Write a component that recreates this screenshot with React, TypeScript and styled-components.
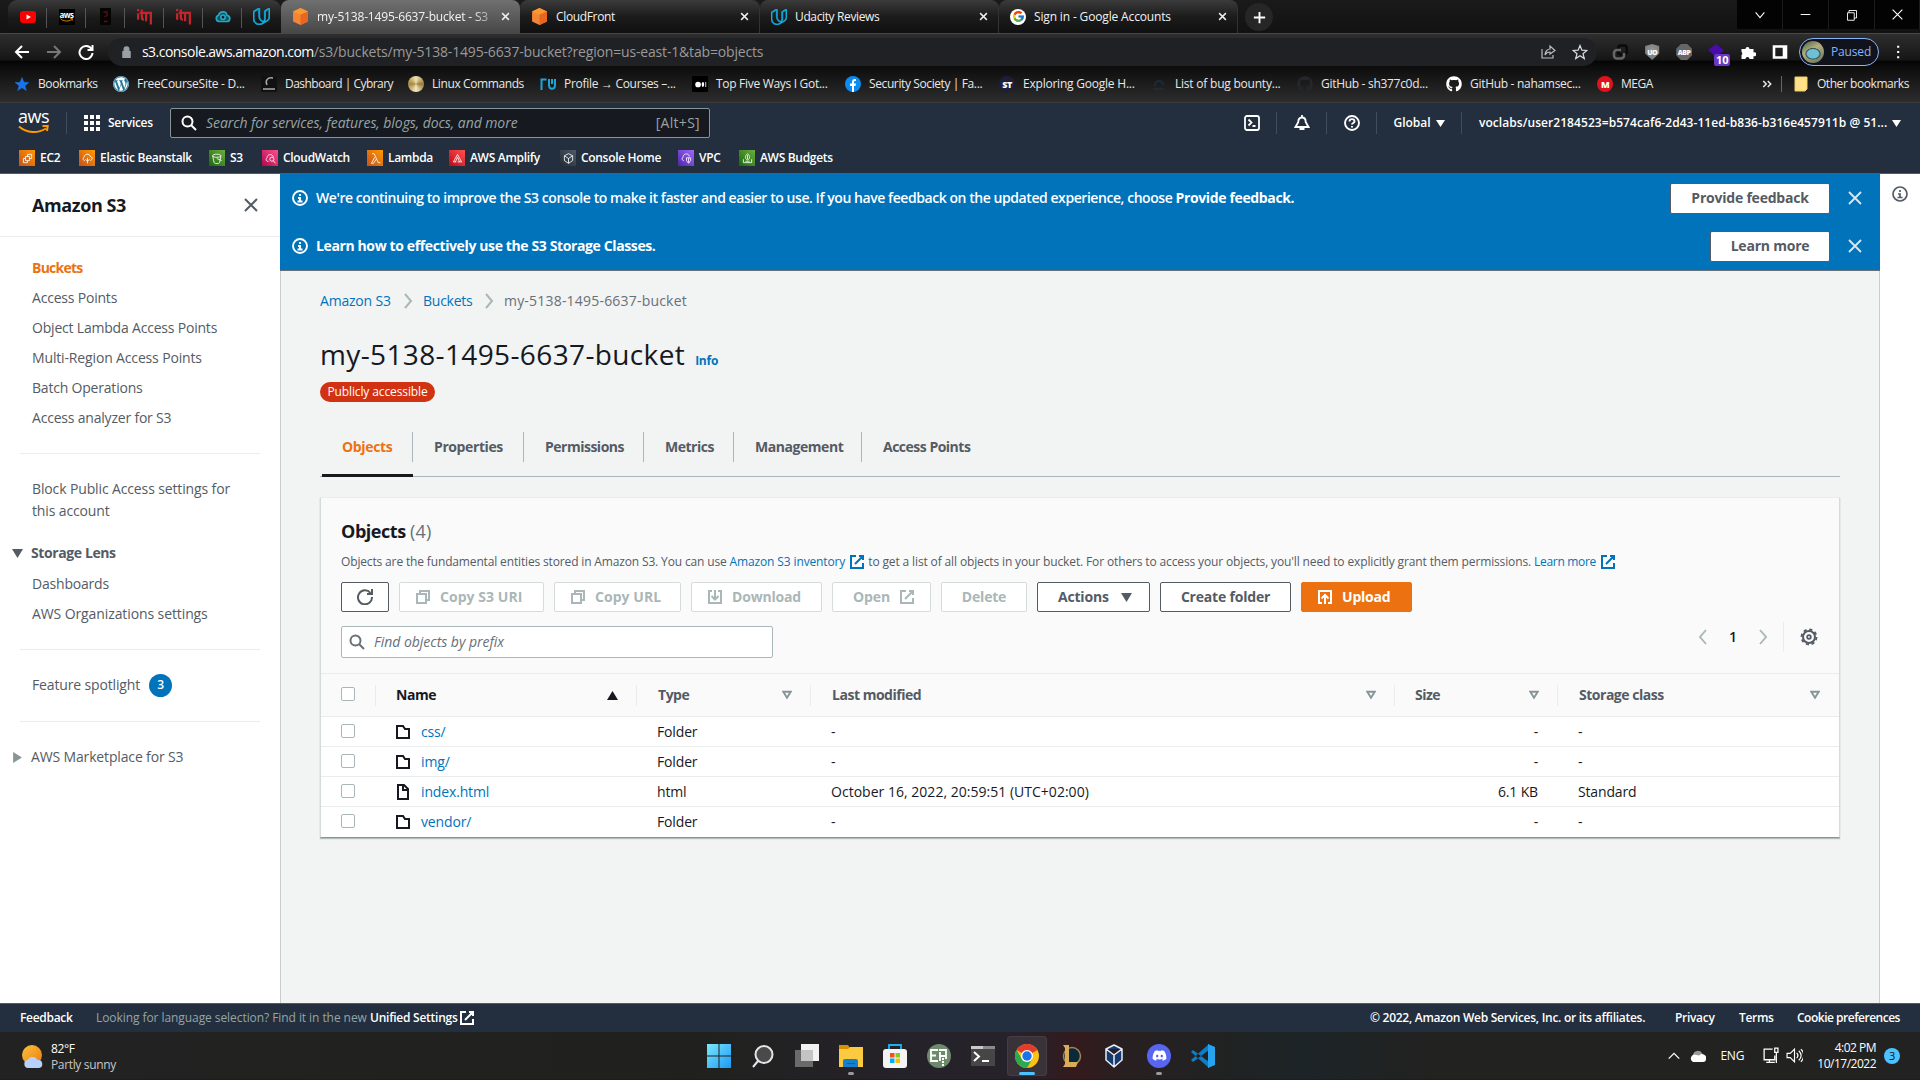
import React from 'react';
import styled, { createGlobalStyle, css } from 'styled-components';
import { FaWordpress, FaGithub, FaDiscord } from 'react-icons/fa';
import { FcGoogle } from 'react-icons/fc';
import { SiUdacity } from 'react-icons/si';

const Global = createGlobalStyle`
  * { box-sizing: border-box; }
  body { margin: 0; overflow: hidden; background: #f2f3f3; }
  svg { display: block; flex: none; }
`;

const Screen = styled.div`
  width: 1920px;
  height: 1080px;
  display: flex;
  flex-direction: column;
  overflow: hidden;
  white-space: nowrap;
  font: 14px/22px 'Open Sans', 'Noto Sans', sans-serif;
  letter-spacing: -0.17px;
  color: #16191f;
`;

const Spacer = styled.div`
  flex: 1;
`;

/* ---------- browser chrome ---------- */

const TabStrip = styled.div`
  height: 33px;
  flex: none;
  display: flex;
  padding-left: 8px;
  background: linear-gradient(#1a1a1a, #121212);
  color: #fff;
  font-size: 12px;
`;

const Pinned = styled.div`
  display: flex;
  background: linear-gradient(#3a3a3a, #1a1a1a 55%, #111);
  border-radius: 9px 9px 8px 0;
  width: 273px;
`;

const PinnedTab = styled.div`
  width: 39.1px;
  height: 33px;
  display: flex;
  align-items: center;
  justify-content: center;
  background: linear-gradient(#555, #555) right 0 top 8px / 1px 20px no-repeat;
  &:last-child {
    background: none;
  }
`;

const Tab = styled.div<{ $active?: boolean; $w: number }>`
  width: ${(p) => p.$w}px;
  display: flex;
  align-items: center;
  padding: 0 10px 0 11px;
  gap: 8px;
  border-radius: 8px 8px 0 0;
  color: #f2f2f2;
  background: ${(p) => (p.$active ? 'linear-gradient(#707070, #474747)' : 'linear-gradient(#3b3b3b, #1c1c1c 50%, #101010)')};
  border-right: ${(p) => (p.$active ? '0' : '1px solid #333')};
`;

const TabTitle = styled.div<{ $fade?: boolean; $ls?: number }>`
  flex: 1;
  overflow: hidden;
  letter-spacing: ${(p) => p.$ls ?? -0.15}px;
  ${(p) =>
    p.$fade &&
    css`
      mask-image: linear-gradient(to right, #000 88%, rgba(0, 0, 0, 0.35));
    `}
`;

const NewTab = styled.div`
  width: 28px;
  height: 28px;
  margin: 3px 0 0 7px;
  border-radius: 50%;
  background: #262626;
  display: flex;
  align-items: center;
  justify-content: center;
`;

const WindowButtons = styled.div`
  display: grid;
  grid-template-columns: repeat(3, 46px) 45px;
  height: 29px;
  background: #030303;
`;

const WindowButton = styled.div`
  display: flex;
  align-items: center;
  justify-content: center;
  border-right: 1px solid #1c1c1c;
`;

const Toolbar = styled.div`
  height: 33px;
  flex: none;
  display: flex;
  align-items: center;
  padding: 4px 15px 0 14px;
  border-top: 1px solid #484848;
  color: #fff;
  background: linear-gradient(#2e2e2e, #161616 80%, #050505 86%, #0c0c0c);
`;

const NavButtons = styled.div`
  display: flex;
  gap: 16px;
  width: 94px;
`;

const Omnibox = styled.div`
  width: 1490px;
  height: 28px;
  border-radius: 14px;
  background: #202124;
  display: flex;
  align-items: center;
  padding: 0 9px 0 12px;
  gap: 9px;
`;

const OmniboxActions = styled.div`
  display: flex;
  gap: 16px;
`;

const Url = styled.div`
  flex: 1;
  color: #9a9a9a;
`;
const UrlHost = styled.span`
  color: #fff;
  letter-spacing: -0.53px;
`;

const Extensions = styled.div`
  display: flex;
  gap: 16px;
  width: 202px;
  padding-left: 15px;
`;

const ExtWithBadge = styled.div`
  position: relative;
`;
const ExtBadge = styled.span`
  position: absolute;
  left: 6px;
  top: 10px;
  width: 16px;
  height: 12px;
  background: #6b38c4;
  border-radius: 2px;
  font-size: 11px;
  font-weight: 700;
  line-height: 12px;
  text-align: center;
`;

const Profile = styled.div`
  width: 80px;
  height: 28px;
  border: 1px solid #8ab4f8;
  border-radius: 14px;
  background: #10131c;
  display: flex;
  align-items: center;
  gap: 7px;
  padding-left: 2px;
  color: #8ab4f8;
  font-size: 12px;
  margin-right: 12px;
`;

const Avatar = styled.div`
  width: 22px;
  height: 22px;
  border-radius: 50%;
  background: radial-gradient(ellipse 8px 6px at 50% 58%, #6fc0d4 0 70%, #2f4f52 90%, transparent), linear-gradient(150deg, #3f5d42, #b5ad80 40%, #66705a);
`;

const Bookmarks = styled.div`
  height: 37px;
  flex: none;
  display: flex;
  align-items: center;
  padding: 0 11px 0 14px;
  background: linear-gradient(#0c0c0c, #2d2d2d);
  border-bottom: 1px solid #3c3c3c;
  color: #e8e8e8;
  font-size: 12px;
  letter-spacing: -0.46px;
`;

const Bookmark = styled.div<{ $w?: number; $ls?: number }>`
  width: ${(p) => (p.$w ? p.$w + 'px' : 'auto')};
  display: flex;
  align-items: center;
  gap: 8px;
  ${(p) => p.$ls !== undefined && `letter-spacing: ${p.$ls}px;`}
`;

const BookmarkRule = styled.div`
  width: 1px;
  height: 16px;
  background: #666;
  margin: 0 11px 0 8px;
`;

const Disc = styled.div<{ $bg: string; $round?: boolean; $size?: number }>`
  width: ${(p) => p.$size ?? 16}px;
  height: ${(p) => p.$size ?? 16}px;
  flex: none;
  border-radius: ${(p) => (p.$round ? '50%' : '1px')};
  background: ${(p) => p.$bg};
  color: #fff;
  font-size: 9px;
  font-weight: 800;
  line-height: 1;
  letter-spacing: -0.5px;
  display: flex;
  align-items: center;
  justify-content: center;
`;

const Shield = styled(Disc)`
  font-size: 7px;
  border-radius: 0;
  clip-path: polygon(50% 0, 94% 12%, 94% 60%, 50% 100%, 6% 60%, 6% 12%);
`;

const Octagon = styled(Disc)`
  font-size: 7px;
  border-radius: 0;
  clip-path: polygon(30% 0, 70% 0, 100% 30%, 100% 70%, 70% 100%, 30% 100%, 0 70%, 0 30%);
`;

const AwsFavicon = styled.div`
  width: 16px;
  height: 16px;
  background: #000;
  display: flex;
  flex-direction: column;
  align-items: center;
  justify-content: center;
  font-size: 8px;
  font-weight: 700;
  line-height: 6px;
  letter-spacing: -0.5px;
`;

/* ---------- AWS header ---------- */

const AwsBar = styled.div`
  height: 71px;
  flex: none;
  background: #232f3e;
  border-bottom: 1px solid #545b64;
  color: #fff;
  display: flex;
  flex-direction: column;
`;

const AwsTop = styled.div`
  height: 40px;
  display: flex;
  align-items: center;
  padding-right: 17px;
  font-size: 12px;
  font-weight: 600;
  letter-spacing: 0;
`;

const AwsLogo = styled.div`
  width: 67px;
  height: 22px;
  padding-left: 18px;
  display: flex;
  flex-direction: column;
  gap: 4px;
  border-right: 1px solid #414d5c;
  font-size: 18px;
  font-weight: 500;
  line-height: 9px;
  letter-spacing: -0.5px;
`;

const Services = styled.div`
  width: 103px;
  display: flex;
  align-items: center;
  gap: 8px;
  padding-left: 17px;
  letter-spacing: -0.3px;
`;

const AwsSearch = styled.div`
  width: 540px;
  height: 30px;
  background: #161920;
  border: 1px solid #879596;
  border-radius: 2px;
  display: flex;
  align-items: center;
  justify-content: space-between;
  padding: 0 9px 0 10px;
  gap: 9px;
  color: #95a5a6;
  font-size: 14px;
  font-weight: 400;
`;

const Placeholder = styled.span<{ $ls?: number }>`
  flex: 1;
  font-style: italic;
  letter-spacing: ${(p) => p.$ls ?? 0}px;
`;

const Shortcut = styled.span`
  letter-spacing: 0.3px;
`;

const AwsItem = styled.div<{ $w: number; $last?: boolean }>`
  width: ${(p) => p.$w}px;
  height: 22px;
  display: flex;
  align-items: center;
  justify-content: center;
  gap: 5px;
  border-right: 1px solid #414d5c;
  ${(p) =>
    p.$last &&
    css`
      justify-content: flex-start;
      padding-left: 17px;
      border-right: 0;
      letter-spacing: 0.06px;
    `}
`;

const Favorites = styled.div`
  height: 30px;
  display: flex;
  align-items: center;
  padding: 0 0 0 19px;
  font-size: 12px;
  font-weight: 600;
  letter-spacing: -0.31px;
`;

const Favorite = styled.div<{ $w: number }>`
  width: ${(p) => p.$w}px;
  display: flex;
  align-items: center;
  gap: 5px;
`;

const FavTile = styled.div<{ $from: string; $to: string }>`
  width: 16px;
  height: 16px;
  display: flex;
  align-items: center;
  justify-content: center;
  background: linear-gradient(45deg, ${(p) => p.$from}, ${(p) => p.$to});
`;

/* ---------- page ---------- */

const Page = styled.div`
  height: 829px;
  flex: none;
  display: grid;
  grid-template-columns: 281px 1599px 40px;
`;

const Sidebar = styled.nav`
  background: #fff;
  border-right: 1px solid #c6cbcb;
  color: #545b64;
`;

const SideHeader = styled.div`
  height: 63px;
  display: flex;
  align-items: center;
  justify-content: space-between;
  padding: 0 21px 1px 32px;
  border-bottom: 1px solid #eaeded;
  color: #16191f;
  font-size: 18px;
  font-weight: 700;
  letter-spacing: -0.4px;
`;

const SideGroup = styled.div<{ $top: number; $bottom: number; $last?: boolean }>`
  margin: 0 20px;
  padding: ${(p) => p.$top}px 0 ${(p) => p.$bottom}px 12px;
  border-bottom: ${(p) => (p.$last ? 0 : '1px solid #eaeded')};
`;

const SideLink = styled.div<{ $active?: boolean; $ls?: number }>`
  height: 30px;
  display: flex;
  align-items: center;
  gap: 9px;
  letter-spacing: ${(p) => p.$ls ?? -0.2}px;
  ${(p) =>
    p.$active &&
    css`
      color: #ec7211;
      font-weight: 700;
      letter-spacing: -0.75px;
    `}
`;

const SideWrapped = styled.div`
  white-space: normal;
  letter-spacing: -0.13px;
  width: 210px;
`;

const SideSection = styled.div<{ $bold?: boolean; $top?: number }>`
  display: flex;
  align-items: center;
  gap: 8px;
  height: 30px;
  margin: ${(p) => p.$top ?? 0}px 0 1px -20px;
  font-weight: ${(p) => (p.$bold ? 700 : 400)};
  letter-spacing: ${(p) => (p.$bold ? -0.4 : -0.15)}px;
`;

const CountBadge = styled.span`
  width: 23px;
  height: 23px;
  border-radius: 50%;
  background: #0073bb;
  color: #fff;
  font-size: 12px;
  font-weight: 600;
  display: flex;
  align-items: center;
  justify-content: center;
`;

const Main = styled.main`
  background: #f2f3f3;
  display: flex;
  flex-direction: column;
  border-right: 1px solid #c6cbcb;
`;

const Flash = styled.div`
  height: 48px;
  display: flex;
  align-items: center;
  background: #0073bb;
  color: #fff;
  padding: 0 17px 0 12px;
  gap: 8px;
  margin: 0 -1px 0 -1px;
  &:nth-child(2) {
    height: 49px;
    border-bottom: 1px solid #687078;
  }
`;

const FlashText = styled.div<{ $bold?: boolean }>`
  flex: 1;
  font-weight: ${(p) => (p.$bold ? 700 : 600)};
  letter-spacing: ${(p) => (p.$bold ? -0.38 : -0.44)}px;
  b {
    font-weight: 700;
    letter-spacing: -0.36px;
  }
`;

const FlashButton = styled.div<{ $w: number }>`
  width: ${(p) => p.$w}px;
  height: 31px;
  background: #fff;
  border: 1px solid #545b64;
  border-radius: 2px;
  color: #545b64;
  font-weight: 700;
  letter-spacing: -0.22px;
  display: flex;
  align-items: center;
  justify-content: center;
  margin-right: 9px;
`;

const Content = styled.div`
  padding: 19px 39px 0 39px;
`;

const Crumbs = styled.div`
  height: 22px;
  display: flex;
  align-items: center;
  color: #687078;
`;

const Crumb = styled.span<{ $w?: number; $link?: boolean; $ls: number }>`
  ${(p) => p.$w && `width: ${p.$w}px;`}
  letter-spacing: ${(p) => p.$ls}px;
  color: ${(p) => (p.$link ? '#0073bb' : '#687078')};
`;

const CrumbArrow = styled.span`
  width: 31px;
  display: flex;
  justify-content: center;
`;

const TitleRow = styled.div`
  margin-top: 24px;
  height: 36px;
  display: flex;
  align-items: baseline;
  gap: 10px;
`;

const Title = styled.h1`
  margin: 0;
  font-size: 28px;
  line-height: 36px;
  font-weight: 400;
  letter-spacing: 0.37px;
`;

const Info = styled.span`
  color: #0073bb;
  font-size: 12px;
  font-weight: 700;
  letter-spacing: -0.25px;
`;

const PublicBadge = styled.div`
  width: 115px;
  height: 20px;
  margin-top: 10px;
  border-radius: 10px;
  background: #d13212;
  color: #fff;
  font-size: 12px;
  line-height: 20px;
  text-align: center;
  letter-spacing: -0.12px;
`;

const Tabs = styled.div`
  height: 63px;
  margin-top: 12px;
  display: flex;
  padding-left: 2px;
  border-bottom: 1px solid #aab7b8;
`;

const PageTab = styled.div<{ $w: number; $active?: boolean; $ls?: number }>`
  width: ${(p) => p.$w}px;
  height: 63px;
  display: flex;
  padding: 22px 0 0 ${(p) => (p.$active ? 20 : 21)}px;
  font-weight: 700;
  line-height: 21px;
  letter-spacing: ${(p) => p.$ls ?? -0.5}px;
  color: ${(p) => (p.$active ? '#ec7211' : '#545b64')};
  background: linear-gradient(#aab7b8, #aab7b8) right 0 top 18px / 1px 30px no-repeat;
  border-bottom: ${(p) => (p.$active ? '3px solid #16191f' : '0')};
  &:last-child {
    background: none;
  }
`;

const Card = styled.section`
  margin-top: 20px;
  width: 1520px;
  background: #fafafa;
  border: 1px solid #d5dbdb;
  border-top-color: #eaeded;
  border-bottom: 1px solid #879596;
  box-shadow: 0 1px 1px rgba(0, 28, 36, 0.25);
`;

const CardHeader = styled.div`
  height: 175px;
  padding: 21px 20px 0;
`;

const CardTitle = styled.h2`
  margin: 0;
  font-size: 18px;
  line-height: 24px;
  font-weight: 700;
  letter-spacing: -0.45px;
  span {
    font-weight: 400;
    color: #687078;
    letter-spacing: 0.2px;
  }
`;

const Description = styled.div`
  margin-top: 7px;
  height: 24px;
  font-size: 12px;
  color: #545b64;
  display: flex;
  align-items: center;
  gap: 3px;
  letter-spacing: -0.133px;
  span {
    letter-spacing: -0.15px;
  }
  a {
    color: #0073bb;
    display: flex;
    align-items: center;
    gap: 4px;
    letter-spacing: -0.13px;
  }
  a:last-child {
    letter-spacing: -0.3px;
  }
`;

const Actions = styled.div`
  display: flex;
  gap: 10px;
  margin-top: 8px;
`;

const Button = styled.div<{ $w: number; $kind?: 'disabled' | 'primary'; $ls?: number; $pad?: number; $gap?: number }>`
  width: ${(p) => p.$w}px;
  height: 30px;
  display: flex;
  align-items: center;
  justify-content: ${(p) => (p.$pad ? 'flex-start' : 'center')};
  padding-left: ${(p) => p.$pad ?? 0}px;
  gap: ${(p) => p.$gap ?? 9}px;
  border-radius: 2px;
  font-weight: 700;
  letter-spacing: ${(p) => p.$ls ?? -0.2}px;
  color: #545b64;
  background: #fff;
  border: 1px solid #545b64;
  ${(p) =>
    p.$kind === 'disabled' &&
    css`
      color: #aab7b8;
      border-color: #d5dbdb;
    `}
  ${(p) =>
    p.$kind === 'primary' &&
    css`
      color: #fff;
      background: #ec7211;
      border-color: #ec7211;
    `}
`;

const FilterRow = styled.div`
  display: flex;
  justify-content: space-between;
  margin-top: 14px;
`;

const Filter = styled.div`
  width: 432px;
  height: 32px;
  background: #fff;
  border: 1px solid #aab7b8;
  border-radius: 2px;
  display: flex;
  align-items: center;
  gap: 9px;
  padding-left: 7px;
  color: #687078;
`;

const Pager = styled.div`
  height: 30px;
  margin: -4px -14px 0 0;
  display: flex;
  align-items: center;
  font-weight: 600;
`;

const PagerCell = styled.div<{ $w: number; $rule?: boolean }>`
  width: ${(p) => p.$w}px;
  height: 30px;
  display: flex;
  align-items: center;
  justify-content: center;
  border-left: ${(p) => (p.$rule ? '1px solid #eaeded' : 0)};
`;

const rowGrid = css`
  display: grid;
  grid-template-columns: 55px 261px 174px 584px 163px 1fr;
  align-items: center;
`;

const HeadRow = styled.div`
  ${rowGrid}
  height: 44px;
  border-top: 1px solid #eaeded;
  border-bottom: 1px solid #eaeded;
  color: #545b64;
  font-weight: 700;
  letter-spacing: -0.48px;
`;

const HeadCell = styled.div<{ $dark?: boolean; $left?: number }>`
  height: 21px;
  display: flex;
  align-items: center;
  justify-content: space-between;
  padding: 0 18px 0 ${(p) => p.$left ?? 21}px;
  border-right: 1px solid #eaeded;
  color: ${(p) => (p.$dark ? '#16191f' : '#545b64')};
  &:last-child {
    border-right: 0;
    padding-right: 19px;
  }
`;

const Row = styled.div`
  ${rowGrid}
  height: 30px;
  background: #fff;
  border-bottom: 1px solid #eaeded;
  letter-spacing: -0.15px;
  &:last-child {
    border-bottom: 0;
  }
`;

const Cell = styled.div<{ $right?: boolean; $ls?: number }>`
  display: flex;
  align-items: center;
  gap: 10px;
  padding: 0 20px;
  justify-content: ${(p) => (p.$right ? 'flex-end' : 'flex-start')};
  ${(p) => p.$ls !== undefined && `letter-spacing: ${p.$ls}px;`}
`;

const NameCell = styled(Cell)`
  padding-left: 19px;
  a {
    color: #0073bb;
  }
`;

const Checkbox = styled.div`
  width: 14px;
  height: 14px;
  margin-top: -2px;
  border: 1px solid #aab7b8;
  border-radius: 2px;
  background: #fff;
`;

const Rail = styled.div`
  background: #fff;
  color: #545b64;
  display: flex;
  justify-content: center;
  padding-top: 12px;
`;

const Footer = styled.footer`
  height: 29px;
  flex: none;
  background: #232f3e;
  border-top: 1px solid #545b64;
  color: #fff;
  font-size: 12px;
  font-weight: 600;
  display: flex;
  align-items: center;
  padding: 0 20px;
`;

const FooterText = styled.span<{ $w?: number; $muted?: boolean; $ls?: number }>`
  ${(p) => p.$w && `width: ${p.$w}px;`}
  letter-spacing: ${(p) => p.$ls ?? -0.3}px;
  ${(p) => p.$muted && 'color: #95a5a6; font-weight: 400;'}
`;

/* ---------- taskbar ---------- */

const Taskbar = styled.div`
  height: 48px;
  flex: none;
  display: grid;
  grid-template-columns: 699px 530px 1fr;
  align-items: center;
  color: #fff;
  font-size: 12px;
  background: linear-gradient(90deg, #222 0, #20211e 36%, #25222a 48%, #26222b 53%, #331a1d 56%, #272021 59%, #202222 64%, #1d2427 68%, #222220 75%, #222);
  border-bottom: 1px solid #2c161c;
`;

const Weather = styled.div`
  display: flex;
  align-items: center;
  gap: 7px;
  padding: 3px 0 0 20px;
  line-height: 16px;
  letter-spacing: -0.35px;
  span {
    display: block;
    color: #c8c8c8;
  }
`;

const Apps = styled.div`
  display: flex;
  gap: 4px;
`;

const AppSlot = styled.div<{ $active?: boolean; $bar?: 'dot' | 'line' }>`
  width: 40px;
  height: 40px;
  border-radius: 4px;
  display: flex;
  align-items: center;
  justify-content: center;
  position: relative;
  ${(p) =>
    p.$active &&
    css`
      background: #393238;
      box-shadow: inset 0 0 0 1px #443d43;
    `}
  ${(p) =>
    p.$bar &&
    css`
      &::after {
        content: '';
        position: absolute;
        bottom: 1px;
        height: 3px;
        border-radius: 2px;
        width: ${p.$bar === 'line' ? 16 : 6}px;
        background: ${p.$bar === 'line' ? '#4cc2ff' : '#9a9a9a'};
      }
    `}
`;

const Tray = styled.div`
  display: flex;
  align-items: center;
  justify-content: flex-end;
  padding-right: 20px;
`;

const TrayGap = styled.div<{ $w: number }>`
  width: ${(p) => p.$w}px;
`;

const Clock = styled.div`
  text-align: right;
  line-height: 16px;
  letter-spacing: -0.5px;
  margin: 0 8px 0 14px;
`;

const TrayBadge = styled.div`
  width: 16px;
  height: 16px;
  border-radius: 50%;
  background: #4cc2ff;
  color: #111;
  font-size: 11px;
  line-height: 16px;
  text-align: center;
`;

/* ---------- icons ---------- */

type IconProps = { d: string; s?: number; c?: string; w?: number; f?: string; vb?: string };
const Icon = ({ d, s = 16, c = 'currentColor', w = 2, f = 'none', vb = '0 0 16 16' }: IconProps) => (
  <svg width={s} height={s} viewBox={vb} fill={f} stroke={c} strokeWidth={w}>
    <path d={d} />
  </svg>
);

const CLOSE = 'M2 2l12 12M14 2L2 14';
const INFO = 'M8 1a7 7 0 1 1 0 14A7 7 0 0 1 8 1zM8 12V8H6M5.5 11.5h5M8 4v2';
const EXTERNAL = 'M10 2h4v4M6 10l8-8M14 9v5H2V2h5';
const COPY = 'M2 5h9v9H2zM5 5V2h9v9h-3';
const FOLDER = 'M2 2h6l2 3h4v9H2z';
const FILE = 'M3 1h6l4 4v10H3zM8 1v5h5';

const TabClose = ({ s = 9 }) => <Icon d={CLOSE} s={s} w={2.6} c="#eee" />;

const Cube = () => (
  <svg width="17" height="17" viewBox="0 0 16 16">
    <path d="M8 0l7 3.2v9.6L8 16l-7-3.2V3.2z" fill="#f58536" />
    <path d="M8 0l7 3.2L8 6.3 1 3.2z" fill="#fa9a2e" />
    <path d="M8 6.3l7-3.1v9.6L8 16z" fill="#e8661f" />
  </svg>
);

const Caret = ({ s = 10, up = false, c = 'currentColor' }) => (
  <svg width={s} height={s} viewBox="0 0 10 10">
    <path d={up ? 'M5 1l5 8H0z' : 'M0 1h10L5 9z'} fill={c} />
  </svg>
);

const SortTri = () => <Icon d="M1.3 1.8h7.400L5 7.800z" s={10} vb="0 0 10 10" w={1.9} c="#879596" />;

const Iti = () => (
  <svg width="17" height="17" viewBox="0 0 16 16" fill="none" stroke="#c4252d" strokeWidth="2.1">
    <path d="M2 5v6M2 1v2M5.500 1.500V9q0 2 2 2M3.500 4.500H14v11M9.500 4.500v8" />
  </svg>
);

const YT = () => (
  <svg width="16" height="16" viewBox="0 0 16 16">
    <rect y="2" width="16" height="12" rx="3" fill="#f00" />
    <path d="M6.5 5.4v5.2L11 8z" fill="#fff" />
  </svg>
);

const Smile = ({ w = 31, h = 9 }) => (
  <svg width={w} height={h} viewBox="0 0 31 9" fill="none" stroke="#f90" strokeWidth="2">
    <path d="M1 1.500c8 7 19 7 27 2M24.500 1h5.200l-.7 5" />
  </svg>
);

const FavIcon = ({ from, to, d }: { from: string; to: string; d: string }) => (
  <FavTile $from={from} $to={to}>
    <Icon d={d} s={11} w={1.2} c="#fff" />
  </FavTile>
);

const Star = ({ fill, stroke }: { fill: string; stroke: string }) => (
  <Icon d="M8 1.500l1.900 4.700 5 .3-3.900 3.200 1.300 4.900L8 11.800l-4.300 2.800L5 9.700 1.100 6.500l5-.3z" f={fill} c={stroke} w={fill === 'none' ? 1.2 : 0.5} />
);

/* ---------- data ---------- */

const favorites = [
  ['EC2', 60, '#c8511b', '#f90', 'M5 5h6v6H5zM2 8v6h6M8 2h6v6M2 8h3M8 14v-3M8 5V2M14 8h-3'],
  ['Elastic Beanstalk', 130, '#c8511b', '#f90', 'M4 11H3a3 3 0 0 1 0-5c0-5 8-6 9-1 3 0 4 5 0 6M8 15V7M5 9l3 3 3-3'],
  ['S3', 53, '#1b660f', '#6cae3e', 'M1 4c0-3 12-3 12 0s-12 3-12 0l2 10c2 2 7 2 8 0l2-10M7 8l7 3'],
  ['CloudWatch', 105, '#b0084d', '#ff4f8b', 'M5 12H3a3 3 0 0 1 0-5c0-6 9-6 9-1M10 6a3 3 0 1 1 0 6 3 3 0 0 1 0-6M12 11l3 4'],
  ['Lambda', 82, '#c8511b', '#f90', 'M3 1h3l6 13h3M7 6L2 15h3l4-6'],
  ['AWS Amplify', 111, '#bd0816', '#ff5252', 'M8 2L2 13h4M8 6l-3 7M8 6l3 7M8 2l6 11H8'],
  ['Console Home', 118, '#232b34', '#4d5a68', 'M8 1l6 3v7l-6 4-6-4V4zM2 4l6 4 6-4M8 8v7'],
  ['VPC', 61, '#4d27a8', '#a166ff', 'M4 11H3a3 3 0 0 1 0-5c0-6 9-6 9-1M8 7h6v4l-3 4-3-4zM11 7v7'],
  ['AWS Budgets', 110, '#1b660f', '#6cae3e', 'M8 1c4 3 4 8 0 9-4-1-4-6 0-9M8 3v6M2 9v5h12V9M5 12h6'],
] as const;

const rows = [
  ['css/', 'Folder', '-', '-', '-'],
  ['img/', 'Folder', '-', '-', '-'],
  ['index.html', 'html', 'October 16, 2022, 20:59:51 (UTC+02:00)', '6.1 KB', 'Standard'],
  ['vendor/', 'Folder', '-', '-', '-'],
];

const pageTabs = [
  ['Objects', 91, -0.35],
  ['Properties', 111, -0.4],
  ['Permissions', 120, -0.5],
  ['Metrics', 90, -0.5],
  ['Management', 128, -0.45],
  ['Access Points', 120, -0.5],
] as const;

/* ---------- sections ---------- */

const BrowserChrome = () => (
  <>
    <TabStrip>
      <Pinned>
        <PinnedTab><YT /></PinnedTab>
        <PinnedTab><AwsFavicon>aws<Smile w={13} h={4} /></AwsFavicon></PinnedTab>
        <PinnedTab>
          <svg width="11" height="17" viewBox="0 0 11 17">
            <rect width="11" height="17" fill="#050505" />
            <path d="M3.500 4h3.500v3.500L4.500 9M4 13.500h3.500" fill="none" stroke="#5e1010" strokeWidth="1.300" />
          </svg>
        </PinnedTab>
        <PinnedTab><Iti /></PinnedTab>
        <PinnedTab><Iti /></PinnedTab>
        <PinnedTab>
          <Icon d="M4 12.500a3.200 3.200 0 0 1-.5-6.200C5 1.500 11.500 2 12 6.500c4 .3 3.500 6 0 6zM8 6a2.200 2.200 0 1 0 0 4.400A2.200 2.200 0 0 0 8 6" c="#25a6c4" f="#12545f" w={1.7} />
        </PinnedTab>
        <PinnedTab><SiUdacity size={17} color="#11b0e4" stroke="#11b0e4" strokeWidth={1} /></PinnedTab>
      </Pinned>
      <Tab $active $w={239}><Cube /><TabTitle $fade $ls={-0.18}>my-5138-1495-6637-bucket - S3</TabTitle><TabClose /></Tab>
      <Tab $w={240}><Cube /><TabTitle $ls={-0.35}>CloudFront</TabTitle><TabClose /></Tab>
      <Tab $w={239}><SiUdacity size={16} color="#11b0e4" stroke="#11b0e4" strokeWidth={1} /><TabTitle $ls={-0.37}>Udacity Reviews</TabTitle><TabClose /></Tab>
      <Tab $w={239}>
        <Disc $bg="#fff" $round><FcGoogle size={13} /></Disc>
        <TabTitle>Sign in - Google Accounts</TabTitle><TabClose />
      </Tab>
      <NewTab><Icon d="M8 2v12M2 8h12" s={15} /></NewTab>
      <Spacer />
      <WindowButtons>
        <WindowButton><Icon d="M3 5l5 6 5-6" s={14} w={1.2} /></WindowButton>
        <WindowButton><Icon d="M2 8h12" s={13} w={1.2} /></WindowButton>
        <WindowButton><Icon d="M2 5h9v10H2zM4 5V2h10v10h-3" s={12} w={1.2} /></WindowButton>
        <WindowButton><Icon d={CLOSE} s={13} w={1.4} /></WindowButton>
      </WindowButtons>
    </TabStrip>
    <Toolbar>
      <NavButtons>
        <Icon d="M15 8H2M8 2L2 8l6 6" />
        <Icon d="M1 8h13M8 2l6 6-6 6" c="#777" />
        <Icon d="M13.500 5A6.500 6.500 0 1 0 14.500 9M14.500 1v5h-5" />
      </NavButtons>
      <Omnibox>
        <Icon d="M3.500 7h9v7h-9zM5 7V4a3 3 0 0 1 6 0v3" s={13} f="#9aa0a6" c="#9aa0a6" w={1.4} />
        <Url><UrlHost>s3.console.aws.amazon.com</UrlHost>/s3/buckets/my-5138-1495-6637-bucket?region=us-east-1&amp;tab=objects</Url>
        <OmniboxActions>
          <Icon d="M2 5v9h11v-3M5 11c0-4 3-6 5-6V2l5 4.500L10 10V8C8 8 6 9 5 11z" c="#bbb" w={1.2} />
          <Star fill="none" stroke="#ddd" />
        </OmniboxActions>
      </Omnibox>
      <Extensions>
        <svg width="16" height="16" viewBox="0 0 16 16" fill="none" strokeWidth="2.600">
          <rect x="6" y="1.500" width="9" height="9" rx="3" stroke="#0a0a0a" />
          <path d="M12 9v2.500a3 3 0 0 1-3 3H5a3 3 0 0 1-3-3V9a3 3 0 0 1 3-3h4" stroke="#666" />
        </svg>
        <Shield $bg="radial-gradient(circle at 50% 40%, #999, #6d6d6d)">UO</Shield>
        <Octagon $bg="#666">ABP</Octagon>
        <ExtWithBadge>
          <Icon d="M8 0l8 6-8 7-8-7z" f="#4a0ca8" c="none" />
          <ExtBadge>10</ExtBadge>
        </ExtWithBadge>
        <Icon d="M1.500 5h4a2 2 0 1 1 4 0h4v3.500a2 2 0 1 1 0 3.500v3h-4a2 2 0 0 0-4 0h-4v-4a2 2 0 0 0 0-3z" f="#fff" c="none" />
        <Icon d="M2 2.500h12v11H2zM12 2v12" w={2.600} />
      </Extensions>
      <Profile><Avatar />Paused</Profile>
      <Icon d="M7 2h2.400M7 8h2.400M7 14h2.400" s={14} w={2.400} />
    </Toolbar>
    <Bookmarks>
      <Bookmark $w={99} $ls={-0.4}><Star fill="#1a73e8" stroke="#1a73e8" />Bookmarks</Bookmark>
      <Bookmark $w={148} $ls={-0.25}>
        <Disc $bg="#21759b" $round><FaWordpress size={16} /></Disc>FreeCourseSite - D...
      </Bookmark>
      <Bookmark $w={147} $ls={-0.53}>
        <Disc $bg="#111"><Icon d="M12 2C6 1 4 5 6 9M2 13h12" c="#aaa" w={1.5} /></Disc>Dashboard | Cybrary
      </Bookmark>
      <Bookmark $w={132} $ls={-0.4}>
        <Disc $round $bg="conic-gradient(#f1e2ae,#9b7d3c,#f5e8bd,#a5873f,#f1e2ae)" />Linux Commands
      </Bookmark>
      <Bookmark $w={152} $ls={-0.3}><Icon d="M1.500 14V3.500h5M9 3v6c0 5 6 5 6 0V3M12 3v5" c="#1aa7d8" w={2} />Profile → Courses –...</Bookmark>
      <Bookmark $w={153} $ls={-0.3}>
        <Disc $bg="#000"><Icon d="M5 4.500a3.500 3.500 0 1 1 0 7 3.500 3.500 0 0 1 0-7M11 5c2 0 2 6 0 6s-2-6 0-6M14 5h1v6h-1z" s={13} f="#fff" c="none" /></Disc>
        Top Five Ways I Got...
      </Bookmark>
      <Bookmark $w={154} $ls={-0.39}>
        <Disc $round $bg="#0d8bf0"><Icon d="M7 16v-6H5V7.500h2V6c0-2.500 1.500-3.500 4-3v2c-1.500 0-2 0-2 1.200v1.300h2L10.500 10H9v6z" f="#fff" c="none" /></Disc>
        Security Society | Fa...
      </Bookmark>
      <Bookmark $w={152} $ls={-0.22}><Disc $bg="#1c1e3a" $round>ST</Disc>Exploring Google H...</Bookmark>
      <Bookmark $w={146} $ls={-0.22}><Icon d="M2 13h11M4 10c0-6 7-7 8-1" c="#1b2b38" />List of bug bounty...</Bookmark>
      <Bookmark $w={149} $ls={-0.3}><FaGithub size={16} color="#24282c" />GitHub - sh377c0d...</Bookmark>
      <Bookmark $w={151} $ls={-0.3}><FaGithub size={16} color="#fff" />GitHub - nahamsec...</Bookmark>
      <Bookmark><Disc $round $bg="#e0131d">M</Disc>MEGA</Bookmark>
      <Spacer />
      <Icon d="M3 4l4 4-4 4M9 4l4 4-4 4" s={12} />
      <BookmarkRule />
      <Bookmark $ls={-0.43}>
        <Icon d="M2 1h12v12l-2 2H2z" f="#ffe08a" c="#f0cf68" w={1} />
        Other bookmarks
      </Bookmark>
    </Bookmarks>
  </>
);

const AwsHeader = () => (
  <AwsBar>
    <AwsTop>
      <AwsLogo>aws<Smile /></AwsLogo>
      <Services>
        <Icon d="M0 0h4v4H0zM6 0h4v4H6zM12 0h4v4h-4zM0 6h4v4H0zM6 6h4v4H6zM12 6h4v4h-4zM0 12h4v4H0zM6 12h4v4H6zM12 12h4v4h-4z" f="#fff" c="none" />
        Services
      </Services>
      <AwsSearch>
        <Icon d="M6.500 1.500a5 5 0 1 1 0 10 5 5 0 0 1 0-10M10.500 10.500l4.500 4.500" c="#fff" />
        <Placeholder $ls={-0.07}>Search for services, features, blogs, docs, and more</Placeholder>
        <Shortcut>[Alt+S]</Shortcut>
      </AwsSearch>
      <Spacer />
      <AwsItem $w={49}><Icon d="M3 1h10a2 2 0 0 1 2 2v10a2 2 0 0 1-2 2H3a2 2 0 0 1-2-2V3a2 2 0 0 1 2-2zM4.500 4.500l3 3-3 3M8.500 11h3" w={1.8} /></AwsItem>
      <AwsItem $w={50}><Icon d="M8 0v3M8 2.500c3 0 3.700 2 3.700 4.500L14.500 12h-13L4.300 7c0-2.500.7-4.500 3.700-4.500zM5.500 14h5" w={1.8} /></AwsItem>
      <AwsItem $w={50}><Icon d="M8 1a7 7 0 1 1 0 14A7 7 0 0 1 8 1zM5.500 6.500c0-3.200 5-3.200 5 0 0 1.500-2.500 1.500-2.500 3M8 11v1.500" w={1.9} /></AwsItem>
      <AwsItem $w={85}>Global<Caret s={9} /></AwsItem>
      <AwsItem $w={441} $last>voclabs/user2184523=b574caf6-2d43-11ed-b836-b316e457911b @ 51...<Caret s={9} /></AwsItem>
    </AwsTop>
    <Favorites>
      {favorites.map(([n, w, from, to, d]) => (
        <Favorite key={n} $w={w}><FavIcon from={from} to={to} d={d} />{n}</Favorite>
      ))}
    </Favorites>
  </AwsBar>
);

const SideNav = () => (
  <Sidebar>
    <SideHeader>Amazon S3<Icon d={CLOSE} c="#545b64" /></SideHeader>
    <SideGroup $top={16} $bottom={20}>
      <SideLink $active>Buckets</SideLink>
      <SideLink>Access Points</SideLink>
      <SideLink>Object Lambda Access Points</SideLink>
      <SideLink $ls={-0.15}>Multi-Region Access Points</SideLink>
      <SideLink>Batch Operations</SideLink>
      <SideLink>Access analyzer for S3</SideLink>
    </SideGroup>
    <SideGroup $top={24} $bottom={20}>
      <SideWrapped>Block Public Access settings for this account</SideWrapped>
      <SideSection $bold $top={16}><Caret s={11} />Storage Lens</SideSection>
      <SideLink>Dashboards</SideLink>
      <SideLink $ls={-0.1}>AWS Organizations settings</SideLink>
    </SideGroup>
    <SideGroup $top={20} $bottom={21}>
      <SideLink $ls={-0.15}>Feature spotlight<CountBadge>3</CountBadge></SideLink>
    </SideGroup>
    <SideGroup $top={20} $bottom={0} $last>
      <SideSection><Icon d="M1 0v10l8-5z" s={11} vb="0 0 10 10" f="#879596" c="none" />AWS Marketplace for S3</SideSection>
    </SideGroup>
  </Sidebar>
);

const ObjectsCard = () => (
  <Card>
    <CardHeader>
      <CardTitle>Objects <span>(4)</span></CardTitle>
      <Description>
        <span>Objects are the fundamental entities stored in Amazon S3. You can use</span>
        <a>Amazon S3 inventory<Icon d={EXTERNAL} /></a>
        to get a list of all objects in your bucket. For others to access your objects, you'll need to explicitly grant them permissions.
        <a>Learn more<Icon d={EXTERNAL} /></a>
      </Description>
      <Actions>
        <Button $w={48}><Icon d="M10 5h5V0M15 8a7 7 0 1 1-1.500-4" /></Button>
        <Button $w={145} $kind="disabled" $pad={15} $ls={0.05}><Icon d={COPY} />Copy S3 URI</Button>
        <Button $w={127} $kind="disabled" $pad={15} $ls={0.05}><Icon d={COPY} />Copy URL</Button>
        <Button $w={131} $kind="disabled" $pad={15} $ls={-0.18}><Icon d="M5 2H2v12h12V2h-3M8 1v9M4.500 7L8 10.500 11.500 7" />Download</Button>
        <Button $w={99} $kind="disabled" $pad={20} $gap={9} $ls={-0.1}>Open<Icon d={EXTERNAL} /></Button>
        <Button $w={86} $kind="disabled">Delete</Button>
        <Button $w={113} $pad={20} $gap={12}>Actions<Caret s={11} /></Button>
        <Button $w={131}>Create folder</Button>
        <Button $w={111} $kind="primary" $pad={15}><Icon d="M5 14H2V2h12v12h-3M8 15V6M4.500 9.500L8 6l3.500 3.500" />Upload</Button>
      </Actions>
      <FilterRow>
        <Filter>
          <Icon d="M6.500 1.500a5 5 0 1 1 0 10 5 5 0 0 1 0-10M10.500 10.500l4.500 4.500" />
          <Placeholder $ls={-0.02}>Find objects by prefix</Placeholder>
        </Filter>
        <Pager>
          <PagerCell $w={30}><Icon d="M11 1L5 8l6 7" c="#aab7b8" w={1.9} /></PagerCell>
          <PagerCell $w={30}>1</PagerCell>
          <PagerCell $w={30}><Icon d="M5 1l6 7-6 7" c="#aab7b8" w={1.9} /></PagerCell>
          <TrayGap $w={5} />
          <PagerCell $w={50} $rule>
            <svg width="18" height="18" viewBox="0 0 18 18" fill="none" stroke="#545b64">
              <circle cx="9" cy="9" r="6" strokeWidth="2" />
              <circle cx="9" cy="9" r="7.500" strokeWidth="1.800" strokeDasharray="3.200 2.690" />
              <circle cx="9" cy="9" r="1.800" strokeWidth="1.800" />
            </svg>
          </PagerCell>
        </Pager>
      </FilterRow>
    </CardHeader>
    <HeadRow>
      <HeadCell $left={20}><Checkbox /></HeadCell>
      <HeadCell $left={20} $dark>Name<Caret s={11} up /></HeadCell>
      <HeadCell>Type<SortTri /></HeadCell>
      <HeadCell>Last modified<SortTri /></HeadCell>
      <HeadCell $left={20}>Size<SortTri /></HeadCell>
      <HeadCell>Storage class<SortTri /></HeadCell>
    </HeadRow>
    <div>
      {rows.map(([name, type, modified, size, storage]) => (
        <Row key={name}>
          <Cell><Checkbox /></Cell>
          <NameCell><Icon d={type === 'html' ? FILE : FOLDER} /><a>{name}</a></NameCell>
          <Cell>{type}</Cell>
          <Cell $ls={0.02}>{modified}</Cell>
          <Cell $right>{size}</Cell>
          <Cell>{storage}</Cell>
        </Row>
      ))}
    </div>
  </Card>
);

const chrome = (
  <svg width="24" height="24" viewBox="0 0 24 24">
    <circle cx="12" cy="12" r="12" fill="#fbc116" />
    <path d="M12 12L1.600 6A12 12 0 0 1 22.400 6z" fill="#e33b2e" />
    <path d="M1.600 6A12 12 0 0 0 12 24l5.200-9L12 12 6.800 15z" fill="#2da94f" />
    <circle cx="12" cy="12" r="6" fill="#fff" />
    <circle cx="12" cy="12" r="4.700" fill="#1a73e8" />
  </svg>
);

const WindowsBar = () => (
  <Taskbar>
    <Weather>
      <svg width="24" height="24" viewBox="0 0 24 24">
        <defs>
          <linearGradient id="sun" x1="0" x2="1" y2="1"><stop stopColor="#f7c43a" /><stop offset="1" stopColor="#ee7a13" /></linearGradient>
        </defs>
        <circle cx="12" cy="10" r="10" fill="url(#sun)" />
        <path d="M8 23a4 4 0 0 1-.5-7.900 5.500 5.500 0 0 1 10 0A4 4 0 0 1 19 23z" fill="#b9d0fb" />
      </svg>
      <div>82°F<span>Partly sunny</span></div>
    </Weather>
    <Apps>
      <AppSlot>
        <svg width="24" height="24" viewBox="0 0 24 24">
          <defs>
            <linearGradient id="win" x1="0" x2="1" y2="1"><stop stopColor="#7be8fc" /><stop offset="1" stopColor="#1b98f5" /></linearGradient>
          </defs>
          <path d="M0 0h11.500v11.500H0zM12.500 0H24v11.500H12.500zM0 12.500h11.500V24H0zM12.500 12.500H24V24H12.500z" fill="url(#win)" />
        </svg>
      </AppSlot>
      <AppSlot>
        <Icon d="M13 2a8.500 8.500 0 1 1 0 17 8.500 8.500 0 0 1 0-17M7 17l-5 6" s={24} vb="0 0 24 24" f="#4a4a4a" c="#e4e4ea" />
      </AppSlot>
      <AppSlot>
        <svg width="24" height="24" viewBox="0 0 24 24">
          <path d="M6 0h18v17H6z" fill="#f2f2f2" /><path d="M0 6h18v17H0z" fill="#777" opacity=".85" /><path d="M6 6h12v11H6z" fill="#c4c4c4" />
        </svg>
      </AppSlot>
      <AppSlot $bar="dot">
        <svg width="24" height="24" viewBox="0 0 24 24">
          <path d="M0 1h9l2 3v3H0z" fill="#d99000" /><path d="M0 5h9l2-2h13v20H0z" fill="#fcca3f" /><path d="M4 23v-6q0-2 2-2h11q2 0 2 2v6z" fill="#1580cd" /><path d="M8 19h8v1H8z" fill="#0b5ea6" />
        </svg>
      </AppSlot>
      <AppSlot>
        <svg width="24" height="24" viewBox="0 0 24 24">
          <path d="M6 6V1h12v5" fill="none" stroke="#21b0ec" strokeWidth="1.800" /><rect y="5" width="24" height="19" rx="3" fill="#f4f4f4" />
          <path d="M7 9h4.500v4.500H7z" fill="#f1511b" /><path d="M12.500 9H17v4.500h-4.500z" fill="#80cc28" /><path d="M7 14.500h4.500V19H7z" fill="#00adef" /><path d="M12.500 14.500H17V19h-4.500z" fill="#fbbc09" />
        </svg>
      </AppSlot>
      <AppSlot>
        <svg width="24" height="24" viewBox="0 0 24 24" fill="none" stroke="#fff">
          <circle cx="12" cy="12" r="12" fill="#6d8a6a" stroke="none" />
          <path d="M11 6H4v11h7M4 11.500h5M12 6h7v6h-6M13 8v9M19 12v3" strokeWidth="1.800" /><path d="M16 14v8" strokeWidth="2" strokeDasharray="2 1" />
        </svg>
      </AppSlot>
      <AppSlot>
        <svg width="24" height="20" viewBox="0 0 24 20">
          <path d="M0 0h24v20H0z" fill="#464646" /><path d="M0 0h12v3H0z" fill="#c9c9c9" /><path d="M12 0h12v3H12z" fill="#8a8a8a" />
          <path d="M3 6l5 4.500L3 15M11 15h7" fill="none" stroke="#fff" strokeWidth="2" />
        </svg>
      </AppSlot>
      <AppSlot $active $bar="line">{chrome}</AppSlot>
      <AppSlot>
        <svg width="24" height="24" viewBox="0 0 24 24">
          <circle cx="13" cy="12" r="8.500" fill="#0a2a3c" stroke="#a8854a" strokeWidth="1.500" /><path d="M4 1h6v17h9l-2 5H4l2-3V4z" fill="#d9ad57" />
        </svg>
      </AppSlot>
      <AppSlot>
        <svg width="24" height="24" viewBox="0 0 24 24" fill="#163a6b" stroke="#e8eef7" strokeWidth="1.500" strokeLinejoin="round">
          <path d="M11 1l8 4v11l-8 7-8-7V5zM3 5l8 6 8-6M11 11v12" />
        </svg>
      </AppSlot>
      <AppSlot $bar="dot"><Disc $bg="#5865f2" $round $size={24}><FaDiscord size={15} /></Disc></AppSlot>
      <AppSlot>
        <svg width="24" height="24" viewBox="0 0 24 24">
          <path d="M0 8l2-2 16 12v6zM0 16l2 2L18 6V0z" fill="#0e7cc8" /><path d="M17 0l7 3v18l-7 3z" fill="#25a3ee" />
        </svg>
      </AppSlot>
    </Apps>
    <Tray>
      <Icon d="M2 11l6-6 6 6" s={14} w={1.500} />
      <TrayGap $w={8} />
      <svg width="17" height="13" viewBox="0 0 17 13"><path d="M4 6a5 5 0 0 1 9-2l2 4H4z" fill="#999" /><path d="M4 13a4 4 0 0 1 1-7.500l5 1a4 4 0 0 1 7 3.500q0 3-3 3z" fill="#fff" /></svg>
      <TrayGap $w={14} />
      ENG
      <TrayGap $w={18} />
      <Icon d="M10 2H2v10h10V8M4 14.500h8M7 12v2.500M12 1h3v4h-3zM13.500 5v10" s={17} w={1.200} />
      <TrayGap $w={7} />
      <Icon d="M1 6h3l4-4v12L4 10H1zM10 5.500c1.500 1.500 1.500 3.500 0 5M12 3.500c3 3 3 6 0 9M14 2c4 4 3 9 0 12" s={17} w={1.100} />
      <Clock>4:02 PM<br />10/17/2022</Clock>
      <TrayBadge>3</TrayBadge>
    </Tray>
  </Taskbar>
);

export default function App() {
  return (
    <Screen>
      <Global />
      <BrowserChrome />
      <AwsHeader />
      <Page>
        <SideNav />
        <Main>
          <Flash>
            <Icon d={INFO} w={1.900} />
            <FlashText>
              We're continuing to improve the S3 console to make it faster and easier to use. If you have feedback on the updated experience, choose <b>Provide feedback.</b>
            </FlashText>
            <FlashButton $w={160}>Provide feedback</FlashButton>
            <Icon d={CLOSE} c="#d8e6ee" w={1.900} />
          </Flash>
          <Flash>
            <Icon d={INFO} w={1.900} />
            <FlashText $bold>Learn how to effectively use the S3 Storage Classes.</FlashText>
            <FlashButton $w={120}>Learn more</FlashButton>
            <Icon d={CLOSE} c="#d8e6ee" w={1.900} />
          </Flash>
          <Content>
            <Crumbs>
              <Crumb $link $w={72} $ls={-0.2}>Amazon S3</Crumb>
              <CrumbArrow><Icon d="M5 1l6 7-6 7" c="#aab7b8" /></CrumbArrow>
              <Crumb $link $w={50} $ls={-0.25}>Buckets</Crumb>
              <CrumbArrow><Icon d="M5 1l6 7-6 7" c="#aab7b8" /></CrumbArrow>
              <Crumb $ls={0.2}>my-5138-1495-6637-bucket</Crumb>
            </Crumbs>
            <TitleRow><Title>my-5138-1495-6637-bucket</Title><Info>Info</Info></TitleRow>
            <PublicBadge>Publicly accessible</PublicBadge>
            <Tabs>
              {pageTabs.map(([label, w, ls], i) => (
                <PageTab key={label} $w={w} $ls={ls} $active={i === 0}>{label}</PageTab>
              ))}
            </Tabs>
            <ObjectsCard />
          </Content>
        </Main>
        <Rail><Icon d={INFO} w={1.700} /></Rail>
      </Page>
      <Footer>
        <FooterText $w={76}>Feedback</FooterText>
        <FooterText $w={274} $muted $ls={-0.07}>Looking for language selection? Find it in the new</FooterText>
        <FooterText $w={89} $ls={-0.25}>Unified Settings</FooterText>
        <Icon d={EXTERNAL} />
        <Spacer />
        <FooterText $w={305} $ls={-0.27}>© 2022, Amazon Web Services, Inc. or its affiliates.</FooterText>
        <FooterText $w={64}>Privacy</FooterText>
        <FooterText $w={58}>Terms</FooterText>
        <FooterText $w={103} $ls={-0.49}>Cookie preferences</FooterText>
      </Footer>
      <WindowsBar />
    </Screen>
  );
}
